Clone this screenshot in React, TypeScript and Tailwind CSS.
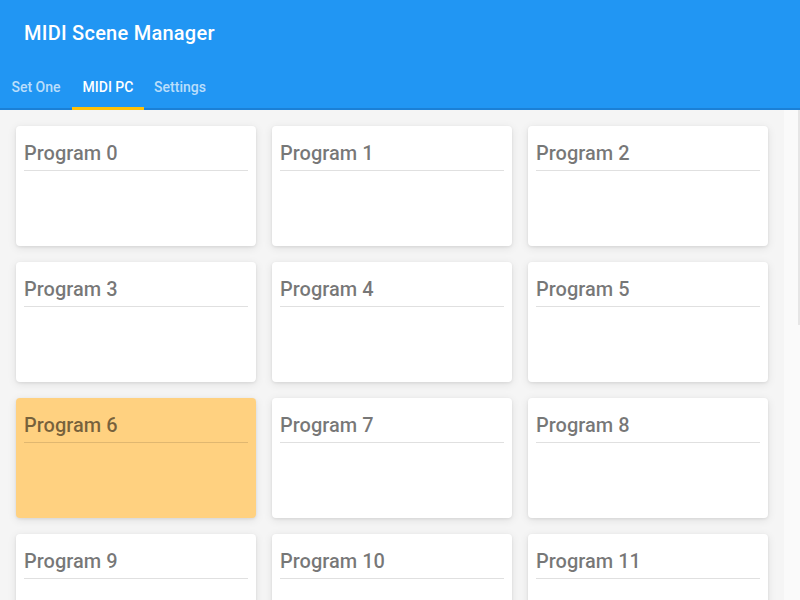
import React from "react";

const programs = Array.from({ length: 12 }, (_, i) => i);
const selected = 6;

function ProgramCard({ index, active }: { index: number; active: boolean }) {
  return (
    <div
      className={`h-[120px] rounded p-2 shadow-[0_1px_3px_0_rgba(0,0,0,0.08),0_2px_10px_0_rgba(0,0,0,0.09)] ${
        active ? "bg-[#ffd180]" : "bg-white"
      }`}
    >
      <div className="border-b border-black/[0.12] pt-[5px] pb-[3px] text-xl leading-7 font-medium text-black/[0.54]">
        Program {index}
      </div>
    </div>
  );
}

export default function App() {
  const tabs = ["Set One", "MIDI PC", "Settings"];
  const current = 1;

  return (
    <div className="flex h-[600px] w-[800px] flex-col overflow-hidden bg-[#f5f5f5] font-['Roboto',sans-serif]">
      <header className="bg-[#2196f3] text-white">
        <div className="flex h-16 items-center px-6 pt-0.5 text-xl font-medium tracking-[0.0125em]">
          MIDI Scene Manager
        </div>
        <nav className="flex h-[46px] border-b-2 border-[#1b80d6] text-sm font-medium">
          {tabs.map((t, i) => (
            <div
              key={t}
              className={`-mb-[2px] flex w-[72px] items-center justify-center border-b-[3px] pt-0.5 ${
                i === current ? "border-[#ffc107] text-white" : "border-transparent text-white/70"
              }`}
            >
              {t}
            </div>
          ))}
        </nav>
      </header>
      <div className="flex flex-1 overflow-hidden">
        <main className="w-[784px] p-4">
          <div className="grid grid-cols-[repeat(3,240px)] gap-4">
            {programs.map((p) => (
              <ProgramCard key={p} index={p} active={p === selected} />
            ))}
          </div>
        </main>
        <aside className="flex w-4 justify-end bg-[#fafafa]">
          <div className="h-[215px] w-[2px] bg-[#e6e6e6]" />
        </aside>
      </div>
    </div>
  );
}
